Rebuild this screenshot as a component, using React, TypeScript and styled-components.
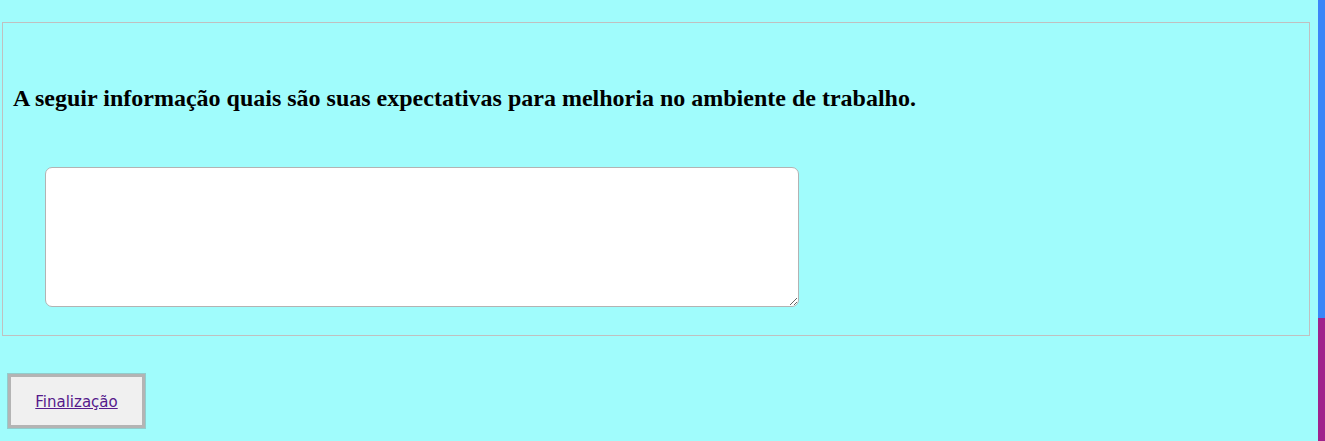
import React from "react";
import styled, { createGlobalStyle } from "styled-components";

const Global = createGlobalStyle`
  html, body { margin: 0; padding: 0; background: #a0fcfc; }
  body { font-family: "Liberation Serif", serif; }
`;

const Page = styled.div`
  display: flex;
  min-height: 441px;
  background: #a0fcfc;
`;

const Main = styled.main`
  flex: 1;
  padding: 22px 8px 0 2px;
`;

const Panel = styled.section`
  border: 1px solid #c0c0c0;
  padding: 61px 10px 28px 10px;
`;

const Question = styled.h2`
  margin: 0;
  font-family: "Liberation Serif", serif;
  font-weight: bold;
  font-size: 24px;
  line-height: 28px;
  color: #000;
`;

const Answer = styled.textarea`
  display: block;
  margin: 55px 0 0 32px;
  width: 754px;
  height: 140px;
  box-sizing: border-box;
  border: 1px solid #b3b3b3;
  border-radius: 7px;
  background: #fff;
  resize: both;
`;

const Footer = styled.div`
  padding: 37px 0 0 5px;
`;

const FinishButton = styled.div`
  display: flex;
  align-items: center;
  justify-content: center;
  width: 139px;
  height: 56px;
  box-sizing: border-box;
  background: #f0f0f0;
  border: 4px solid #b4b4b4;
  outline: 1px solid #92cccc;
  outline-offset: -1px;
`;

const Link = styled.a`
  font-family: "DejaVu Sans", sans-serif;
  font-size: 15px;
  color: #551a8b;
  text-decoration: underline;
  padding-top: 2px;
`;

const ScrollStrip = styled.div`
  width: 7px;
  display: flex;
  flex-direction: column;
`;

const StripPart = styled.div<{ $color: string; $h?: number }>`
  background: ${(p) => p.$color};
  ${(p) => (p.$h ? `height: ${p.$h}px;` : "flex: 1;")}
`;

export default function App() {
  return (
    <>
      <Global />
      <Page>
        <Main>
          <Panel>
            <Question>
              A seguir informação quais são suas expectativas para melhoria no ambiente de trabalho.
            </Question>
            <Answer />
          </Panel>
          <Footer>
            <FinishButton>
              <Link href="#">Finalização</Link>
            </FinishButton>
          </Footer>
        </Main>
        <ScrollStrip>
          <StripPart $color="#3a86f8" $h={318} />
          <StripPart $color="#a0228c" />
        </ScrollStrip>
      </Page>
    </>
  );
}
